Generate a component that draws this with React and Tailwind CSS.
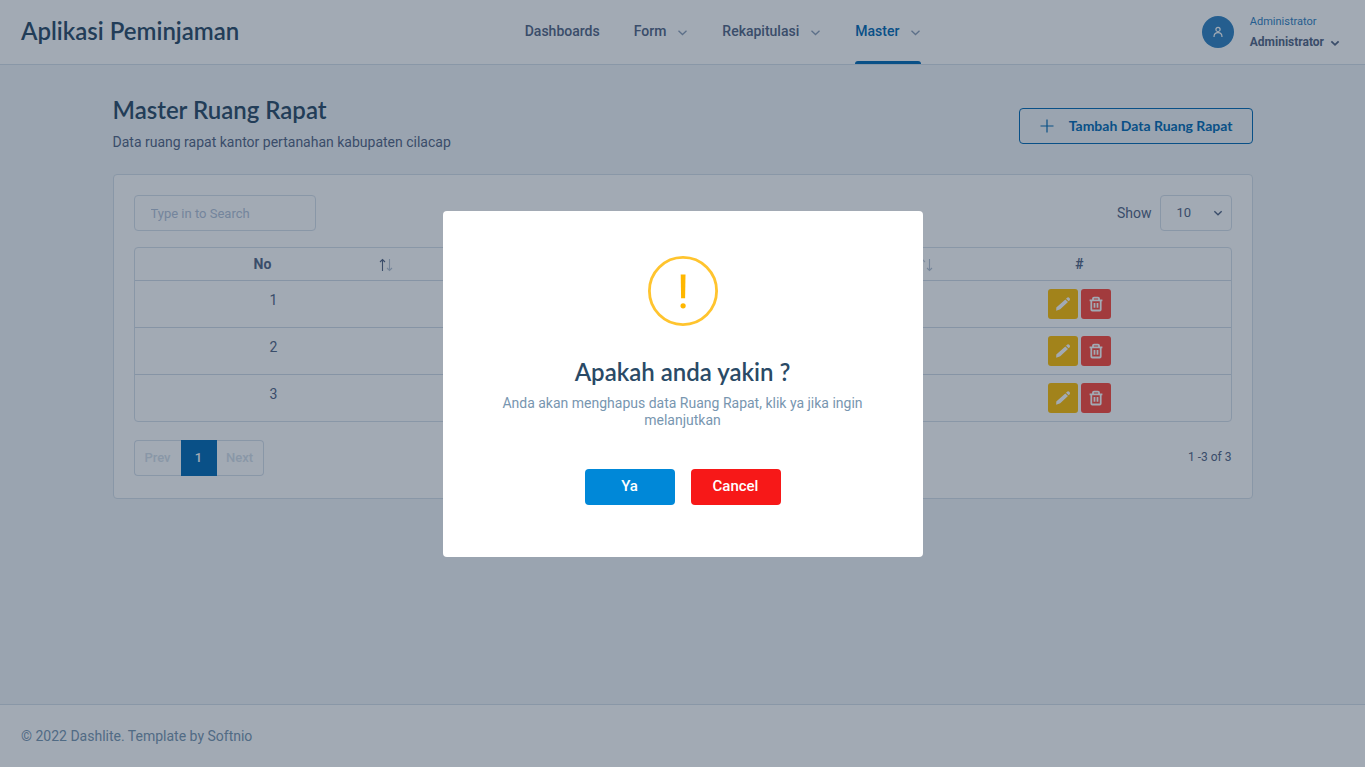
import React from "react";

const rooms = [{ id: 1 }, { id: 2 }, { id: 3 }];

const menu = [
  { label: "Dashboards", submenu: false, active: false },
  { label: "Form", submenu: true, active: false },
  { label: "Rekapitulasi", submenu: true, active: false },
  { label: "Master", submenu: true, active: true },
];

function Chevron({ className, weight = 1.3 }) {
  return (
    <svg viewBox="0 0 11 11" className={className} fill="none" stroke="currentColor" strokeWidth={weight} aria-hidden="true">
      <path d="M1.5 3.7 5.5 7.5 9.5 3.7" />
    </svg>
  );
}

function UserIcon() {
  return (
    <svg viewBox="0 0 12 12" className="size-3" fill="none" stroke="currentColor" strokeWidth="1.2" aria-hidden="true">
      <circle cx="6" cy="3.4" r="2.1" />
      <path d="M2 11c0-2.6 1.4-4.3 4-4.3s4 1.7 4 4.3" />
    </svg>
  );
}

function PlusIcon() {
  return (
    <svg viewBox="0 0 14 14" className="size-3.5" stroke="currentColor" strokeWidth="1.2" aria-hidden="true">
      <path d="M7 .5v13M.5 7h13" />
    </svg>
  );
}

function PencilIcon() {
  return (
    <svg viewBox="0 0 16 16" className="size-4" fill="currentColor" aria-hidden="true">
      <path d="M11.8 1.9a1.9 1.9 0 0 1 2.7 0 1.9 1.9 0 0 1 0 2.6l-.8.8-2.7-2.6zM10.3 3.4 13 6.1 5.2 13.2 1.2 14.8 1.3 11.6z" />
    </svg>
  );
}

function TrashIcon() {
  return (
    <svg viewBox="0 0 16 16" className="size-4" fill="none" stroke="currentColor" strokeWidth="1.8" aria-hidden="true">
      <path d="M1.6 4.3h12.8M5 4V2.6c0-.6.4-1 1-1h4c.6 0 1 .4 1 1V4M3.3 4.5v9c0 .6.4 1 1 1h7.4c.6 0 1-.4 1-1v-9M6.5 7v4.8M9.5 7v4.8" />
    </svg>
  );
}

function SortIcon({ up, down }) {
  return (
    <svg viewBox="0 0 14 14" className="mt-0.5 h-3.5 w-3.5" fill="none" strokeWidth="1.1" aria-hidden="true">
      <path className={up} d="M3.5 13V1.5M1 4l2.5-2.5L6 4" />
      <path className={down} d="M10.5 1v11.5M8 10l2.5 2.5L13 10" />
    </svg>
  );
}

function Header() {
  return (
    <header className="flex h-[65px] items-center justify-between border-b border-[#d6dfea] bg-white pr-[25px] pl-[21px]">
      <a href="#" className="pb-0.5 font-['Lato',sans-serif] text-2xl leading-8 font-semibold text-[#2a4a66]">
        Aplikasi Peminjaman
      </a>
      <nav className="flex h-full gap-[34px] pl-[5px]">
        {menu.map((item) => (
          <a
            key={item.label}
            href="#"
            className={`relative flex items-center gap-[11px] pb-0.5 text-sm font-medium ${item.active ? "text-[#0069b4]" : "text-[#526484]"}`}
          >
            {item.label}
            {item.submenu && <Chevron className="mt-0.5 size-[11px] text-[#8c9fb8]" />}
            {item.active && <span className="absolute inset-x-0 bottom-0 h-[3px] rounded-t-sm bg-[#0069b4]" />}
          </a>
        ))}
      </nav>
      <button type="button" className="flex items-center gap-4 text-left">
        <span className="flex size-8 items-center justify-center rounded-full bg-[#2f81c1] text-white">
          <UserIcon />
        </span>
        <span className="block">
          <span className="block text-[11px] leading-5 text-[#2f7fc1]">Administrator</span>
          <span className="flex items-center gap-[6px] text-xs leading-5 font-bold text-[#526484]">
            Administrator
            <Chevron className="mt-0.5 size-2.5" weight={2} />
          </span>
        </span>
      </button>
    </header>
  );
}

function RoomTable() {
  return (
    <div className="mt-4 overflow-hidden rounded border border-[#d6dfea]">
      <table className="w-full table-fixed border-collapse text-center text-sm text-[#526484]">
        <thead>
          <tr className="h-8 border-b border-[#d0dae6]">
            <th className="w-[278px] py-0 pr-5 pl-3 font-bold">
              <span className="flex items-center">
                <span className="flex-1 text-center">No</span>
                <SortIcon up="stroke-[#526484]" down="stroke-[#b4c1d2]" />
              </span>
            </th>
            <th className="py-0 pr-5 pl-3">
              <span className="flex justify-end">
                <SortIcon up="stroke-[#c3cddb]" down="stroke-[#b4c1d2]" />
              </span>
            </th>
            <th className="w-[278px] py-0 pr-6 font-bold">#</th>
          </tr>
        </thead>
        <tbody>
          {rooms.map((room) => (
            <tr key={room.id} className="border-b border-[#d0dae6] align-top last:border-0">
              <td className="px-2 py-2 leading-[22px]">{room.id}</td>
              <td className="px-2 py-2" />
              <td className="py-2 pr-6">
                <div className="flex justify-center gap-[3px]">
                  <button type="button" aria-label="Edit" className="flex size-[30px] items-center justify-center rounded-[3px] bg-[#ffbe00] text-white">
                    <PencilIcon />
                  </button>
                  <button type="button" aria-label="Hapus" className="flex size-[30px] items-center justify-center rounded-[3px] bg-[#ff463a] text-white">
                    <TrashIcon />
                  </button>
                </div>
              </td>
            </tr>
          ))}
        </tbody>
      </table>
    </div>
  );
}

function Content() {
  return (
    <main className="mx-auto w-full max-w-[1140px] flex-1 pt-[29px]">
      <div className="flex items-start justify-between">
        <div>
          <h1 className="font-['Lato',sans-serif] text-2xl leading-8 font-semibold text-[#2a4a66]">Master Ruang Rapat</h1>
          <p className="mt-1 text-sm leading-6 text-[#526484]">Data ruang rapat kantor pertanahan kabupaten cilacap</p>
        </div>
        <button
          type="button"
          className="mt-[14px] flex h-9 items-center gap-[15px] rounded-[4px] border border-[#0069b4] pr-[19px] pl-5 font-['Lato',sans-serif] text-sm font-bold text-[#0069b4]"
        >
          <PlusIcon />
          Tambah Data Ruang Rapat
        </button>
      </div>
      <section className="mt-5 rounded border border-[#d6dfea] bg-white px-5 pt-5 pb-[22px]">
        <div className="flex items-center justify-between">
          <input
            type="search"
            aria-label="Type in to Search"
            placeholder="Type in to Search"
            className="h-9 w-[182px] rounded border border-[#d6dfea] px-4 text-[13px] placeholder:text-[#b3c2d8]"
          />
          <div className="flex items-center gap-2 text-sm text-[#526484]">
            <label htmlFor="page-size">Show</label>
            <span className="relative">
              <select id="page-size" defaultValue="10" className="h-9 w-[72px] appearance-none rounded border border-[#d6dfea] pl-4 text-[13px]">
                <option>10</option>
                <option>25</option>
                <option>50</option>
              </select>
              <Chevron className="pointer-events-none absolute top-[13px] right-[9px] size-2.5" weight={1.5} />
            </span>
          </div>
        </div>
        <RoomTable />
        <div className="mt-[18px] flex items-center justify-between">
          <div className="flex h-9 text-[13px] font-medium">
            <button type="button" disabled className="w-[47px] rounded-l border border-r-0 border-[#d6dfea] text-[#d6dfea]">Prev</button>
            <button type="button" className="w-9 bg-[#0069b4] text-white">1</button>
            <button type="button" disabled className="w-[47px] rounded-r border border-l-0 border-[#d6dfea] text-[#d6dfea]">Next</button>
          </div>
          <p className="pb-0.5 text-xs text-[#526484]">1 -3 of 3</p>
        </div>
      </section>
    </main>
  );
}

function ConfirmDialog() {
  return (
    <div className="fixed inset-0 flex items-center justify-center bg-[#162b44]/40">
      <div
        role="alertdialog"
        aria-modal="true"
        aria-labelledby="confirm-title"
        aria-describedby="confirm-text"
        className="flex w-[480px] max-w-full flex-col items-center rounded bg-white px-12 pt-[45px] pb-[52px] text-center"
      >
        <svg viewBox="0 0 70 70" className="size-[70px]" aria-hidden="true">
          <circle cx="35" cy="35" r="33.6" fill="none" stroke="#ffc42e" strokeWidth="2.8" />
          <path d="M32.7 18.5h4.8l-.4 23.8h-4z" fill="#ffb700" />
          <circle cx="35.1" cy="49.8" r="2.6" fill="#ffb700" />
        </svg>
        <h2 id="confirm-title" className="mt-[30px] font-['Lato',sans-serif] text-2xl leading-8 font-semibold text-[#2a4a66]">
          Apakah anda yakin ?
        </h2>
        <p id="confirm-text" className="mt-[7px] text-sm leading-[17px] text-[#7896b0]">
          Anda akan menghapus data Ruang Rapat, klik ya jika ingin melanjutkan
        </p>
        <div className="mt-10 flex gap-4 text-[15px] font-medium text-white">
          <button type="button" className="h-9 w-[90px] rounded-[4px] bg-[#0088d8]">Ya</button>
          <button type="button" className="h-9 w-[90px] rounded-[4px] bg-[#f71818]">Cancel</button>
        </div>
      </div>
    </div>
  );
}

export default function App() {
  return (
    <div className="flex min-h-screen flex-col bg-[#f2f6f8] font-['Roboto',sans-serif]">
      <Header />
      <Content />
      <footer className="border-t border-[#d6dfea] bg-white px-[21px] py-[21px] text-sm text-[#7896b0]">
        © 2022 Dashlite. Template by <a href="#">Softnio</a>
      </footer>
      <ConfirmDialog />
    </div>
  );
}
